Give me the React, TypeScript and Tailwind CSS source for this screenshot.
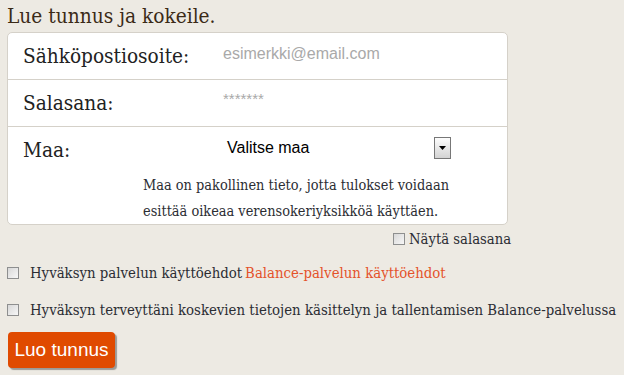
import React from "react";

const SERIF = "font-['Roboto_Slab','DejaVu_Serif',serif]";

function FakeCheckbox({ className = "" }: { className?: string }) {
  return (
    <span
      className={`inline-block h-[12px] w-[12px] shrink-0 border border-[#8e8f8f] bg-gradient-to-br from-[#d8d8d8] to-[#f7f7f7] ${className}`}
    />
  );
}

export default function App() {
  return (
    <div className={`min-h-[375px] w-[624px] bg-[#edeae3] px-[7px] ${SERIF} font-stretch-condensed`}>
      <h1 className="pt-[3px] text-[20.7px] leading-[26px] text-[#3b2a17]">Lue tunnus ja kokeile.</h1>

      <div className="mt-[3px] w-[501px] rounded-[5px] border border-[#d5d1c9] bg-white">
        <div className="flex h-[47px] items-center border-b border-[#d5d1c9]">
          <span className="w-[215px] pl-[15px] text-[20.6px] text-[#222]">Sähköpostiosoite:</span>
          <span className="-mt-[4px] font-['Liberation_Sans',Arial,sans-serif] text-[16px] text-[#a9a9a9]">
            esimerkki@email.com
          </span>
        </div>
        <div className="flex h-[47px] items-center border-b border-[#d5d1c9]">
          <span className="w-[215px] pl-[15px] text-[20.6px] text-[#222]">Salasana:</span>
          <span className="-mt-[8px] font-['Liberation_Sans',Arial,sans-serif] text-[15px] text-[#a9a9a9]">
            *******
          </span>
        </div>
        <div className="h-[97px] pt-[9px]">
          <div className="flex h-[24px] items-center">
            <span className="mt-[5px] w-[219px] pl-[15px] text-[20.6px] text-[#222]">Maa:</span>
            <span className="w-[207px] font-['Liberation_Sans',Arial,sans-serif] text-[16px] text-black">
              Valitse maa
            </span>
            <span className="flex h-[22px] w-[17px] items-center justify-center border border-[#777] bg-gradient-to-b from-[#fdfdfd] to-[#d3d3d3]">
              <svg width="7" height="4" viewBox="0 0 7 4">
                <path d="M0 0h7L3.5 4z" fill="#000" />
              </svg>
            </span>
          </div>
          <p className="mt-[12px] pl-[135px] text-[14.4px] leading-[26px] text-[#2b2d33]">
            Maa on pakollinen tieto, jotta tulokset voidaan
            <br />
            esittää oikeaa verensokeriyksikköä käyttäen.
          </p>
        </div>
      </div>

      <div className="mt-[6px] flex items-center pl-[386px]">
        <FakeCheckbox />
        <span className="ml-[4px] text-[14.7px] leading-[16px] text-[#2b2d33]">Näytä salasana</span>
      </div>

      <div className="mt-[17px] flex items-center whitespace-nowrap">
        <FakeCheckbox />
        <span className="ml-[11px] text-[14.8px] leading-[18px] text-[#2b2d33]">Hyväksyn palvelun käyttöehdot</span>
        <a className="ml-[3px] text-[14.8px] leading-[18px] text-[#e4532b]">Balance-palvelun käyttöehdot</a>
      </div>

      <div className="mt-[19px] flex items-center whitespace-nowrap">
        <FakeCheckbox />
        <span className="ml-[11px] text-[14.8px] leading-[18px] text-[#2b2d33]">
          Hyväksyn terveyttäni koskevien tietojen käsittelyn ja tallentamisen Balance-palvelussa
        </span>
      </div>

      <button className="ml-[1px] mt-[13px] flex h-[36px] w-[107px] items-center justify-center rounded-[4px] bg-[#e04a00] font-['Liberation_Sans',Arial,sans-serif] text-[19px] text-white shadow-[2px_2px_1px_#9c9a96]">
        Luo tunnus
      </button>
    </div>
  );
}
